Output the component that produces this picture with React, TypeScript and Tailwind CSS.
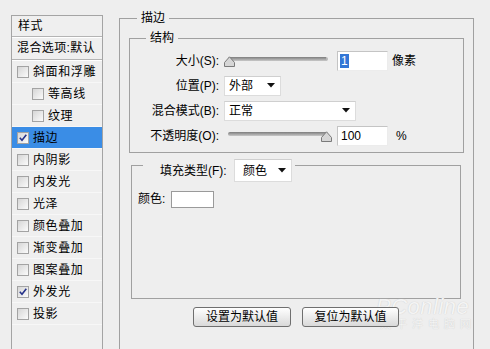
import React from "react";

function Check({ checked }: { checked?: boolean }) {
  return (
    <span className="w-[12px] h-[12px] shrink-0 border border-[#a3a3a3] bg-linear-to-br from-[#d6d6d6] to-[#fbfbfb] flex items-center justify-center">
      {checked && (
        <svg width="10" height="10" viewBox="0 0 10 10">
          <path d="M1.8 4.8 L4 7.3 L8.3 1.8" fill="none" stroke="#25328a" strokeWidth="1.6" />
        </svg>
      )}
    </span>
  );
}

type Item = { label: string; nested?: boolean; checked?: boolean; active?: boolean };

const items: Item[] = [
  { label: "斜面和浮雕" },
  { label: "等高线", nested: true },
  { label: "纹理", nested: true },
  { label: "描边", checked: true, active: true },
  { label: "内阴影" },
  { label: "内发光" },
  { label: "光泽" },
  { label: "颜色叠加" },
  { label: "渐变叠加" },
  { label: "图案叠加" },
  { label: "外发光", checked: true },
  { label: "投影" },
];

function Slider({ thumbLeft }: { thumbLeft: number }) {
  return (
    <div className="relative w-[108px] h-[12px] shrink-0">
      <div className="absolute left-[4px] right-[4px] top-[2px] h-[4px] rounded-full bg-linear-to-b from-[#7d7d7d] to-[#c9c9c9] border-r-2 border-[#b8b8b8]" />
      <svg
        className="absolute top-[1px]"
        style={{ left: thumbLeft }}
        width="11"
        height="11"
        viewBox="0 0 11 11"
      >
        <polygon points="0.5,10.5 0.5,6.5 5.5,0.8 10.5,6.5 10.5,10.5" fill="#d6d6d6" stroke="#7a7a7a" strokeWidth="1" />
      </svg>
    </div>
  );
}

function Arrow() {
  return (
    <svg width="8" height="5" viewBox="0 0 8 5" className="shrink-0">
      <polygon points="0,0 8,0 4,4.5" fill="#111" />
    </svg>
  );
}

function Dropdown({ text, w, h = 20, pl = 4, pr = 5 }: { text: string; w: number; h?: number; pl?: number; pr?: number }) {
  return (
    <div
      className="bg-white border border-[#dcdcdc] border-t-[#cfcfcf] flex items-center justify-between shrink-0"
      style={{ width: w, height: h, paddingLeft: pl, paddingRight: pr }}
    >
      <span className="leading-[16px]">{text}</span>
      <Arrow />
    </div>
  );
}

function Field({ children }: { children: React.ReactNode }) {
  return (
    <div className="ml-[5px] w-[51px] h-[20px] bg-white border border-[#c4c4c4] border-r-[#ececec] border-b-[#ececec] flex items-center pl-[2px] shrink-0">
      {children}
    </div>
  );
}

export default function App() {
  return (
    <div className="relative w-[490px] h-[349px] overflow-hidden bg-[#eeeeee] flex items-start text-[12px] text-black font-['Liberation_Sans','Noto_Sans_CJK_SC',sans-serif]">
      {/* watermark (behind) */}
      <div className="absolute left-[376px] top-[296px] pointer-events-none select-none flex flex-col items-start">
        <span className="text-[22px] leading-[22px] text-[#f4f4f4] italic [text-shadow:0_0_1px_#c4c4c4] tracking-[0.5px]">PConline</span>
        <span className="text-[11px] leading-[13px] text-[#f4f4f4] [text-shadow:0_0_1px_#c4c4c4] tracking-[5px] ml-[4px]">太平洋电脑网</span>
      </div>

      {/* Left list */}
      <div className="relative ml-[11px] mt-[15px] w-[92px] h-[400px] shrink-0 border border-[#a4a4a4] bg-[#efefef]">
        <div className="h-[21px] leading-[21px] pl-[6px] tracking-[0.5px] border-b border-[#b4b4b4] shadow-[0_1px_0_#ffffff]">样式</div>
        <div className="h-[23px] leading-[22px] pl-[5px] tracking-[0.4px] whitespace-nowrap overflow-hidden border-b border-[#b4b4b4] shadow-[0_1px_0_#ffffff]">混合选项:默认</div>
        <div className="pt-[1px]">
          {items.map((it) => (
            <div
              key={it.label}
              className={
                "h-[22px] flex items-center border-b border-[#f7f7f7] tracking-[0.6px] " +
                (it.active ? "bg-[#3a8de6] " : "")
              }
              style={{ paddingLeft: it.nested ? 20 : 5 }}
            >
              <Check checked={it.checked} />
              <span className="ml-[4px] leading-[16px]">{it.label}</span>
            </div>
          ))}
        </div>
      </div>

      {/* Right panel */}
      <fieldset className="m-0 mt-[10px] ml-[16px] w-[355px] h-[420px] shrink-0 min-w-0 border border-[#a0a0a0] px-[9px] pt-[4px] pb-0">
        <legend className="ml-[8px] px-[4px] leading-[16px] h-[16px] bg-[#eeeeee]">描边</legend>

        <fieldset className="m-0 p-0 min-w-0 border border-[#a0a0a0] pt-[2px] pb-[4px]">
          <legend className="ml-[16px] px-[4px] leading-[16px] h-[16px]">结构</legend>

          <div className="h-[25px] flex items-center">
            <span className="w-[89px] text-right">大小(S):</span>
            <div className="ml-[5px] flex items-center">
              <Slider thumbLeft={0} />
              <Field>
                <span className="bg-[#3276d6] text-white leading-[14px] px-[1px]">1</span>
              </Field>
              <span className="ml-[4px]">像素</span>
            </div>
          </div>

          <div className="h-[25px] flex items-center">
            <span className="w-[89px] text-right">位置(P):</span>
            <div className="ml-[5px]">
              <Dropdown text="外部" w={57} />
            </div>
          </div>

          <div className="h-[25px] flex items-center">
            <span className="w-[89px] text-right">混合模式(B):</span>
            <div className="ml-[5px]">
              <Dropdown text="正常" w={132} />
            </div>
          </div>

          <div className="h-[25px] flex items-center">
            <span className="w-[89px] text-right">不透明度(O):</span>
            <div className="ml-[5px] flex items-center">
              <Slider thumbLeft={97} />
              <Field>
                <span className="leading-[14px] pl-[1px]">100</span>
              </Field>
              <span className="ml-[8px]">%</span>
            </div>
          </div>
        </fieldset>

        <fieldset className="m-0 mt-[6px] ml-[2px] mr-[3px] p-0 min-w-0 border border-[#a0a0a0]">
          <legend className="ml-[11px] pl-[17px] pr-[3px] h-[12px] flex items-start overflow-visible">
            <div className="flex items-center h-[23px]">
              <span className="w-[70px] whitespace-nowrap">填充类型(F):</span>
              <div className="ml-[4px]">
                <Dropdown text="颜色" w={58} h={23} pl={8} pr={5} />
              </div>
            </div>
          </legend>
          <div className="h-[127px] pt-[20px] pl-[6px] flex items-start">
            <span className="w-[33px] leading-[17px]">颜色:</span>
            <div className="w-[43px] h-[17px] bg-white border border-[#9a9a9a]" />
          </div>
        </fieldset>

        <div className="relative z-10 mt-[8px] ml-[64px] flex gap-[11px]">
          <button className="w-[98px] h-[20px] border border-[#6f6f6f] rounded-[3px] bg-linear-to-b from-[#ffffff] to-[#d9d9d9] flex items-center justify-center leading-[16px]">
            设置为默认值
          </button>
          <button className="w-[97px] h-[20px] border border-[#6f6f6f] rounded-[3px] bg-linear-to-b from-[#ffffff] to-[#d9d9d9] flex items-center justify-center leading-[16px]">
            复位为默认值
          </button>
        </div>
      </fieldset>
    </div>
  );
}
